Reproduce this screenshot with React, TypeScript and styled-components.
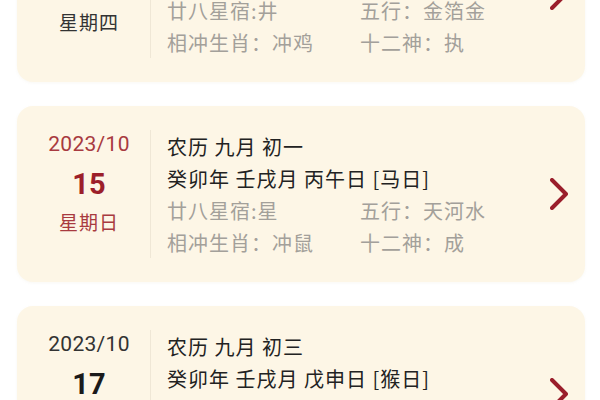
import styled, { createGlobalStyle } from 'styled-components'

const GlobalStyle = createGlobalStyle`
  html, body {
    margin: 0;
    padding: 0;
    background: #ffffff;
    overflow: hidden;
  }
  body {
    font-family: "Noto Sans CJK SC", Roboto, sans-serif;
  }
`

type Day = {
  ym: string
  day: string
  week: string
  lunar: string
  ganzhi: string
  xiu: string
  wuxing: string
  chong: string
  shen: string
  highlight?: boolean
}

const days: Day[] = [
  { ym: '2023/10', day: '12', week: '星期四', lunar: '农历 八月 廿八', ganzhi: '癸卯年 壬戌月 癸卯日 [兔日]', xiu: '廿八星宿:井', wuxing: '五行：金箔金', chong: '相冲生肖：冲鸡', shen: '十二神：执' },
  { ym: '2023/10', day: '15', week: '星期日', lunar: '农历 九月 初一', ganzhi: '癸卯年 壬戌月 丙午日 [马日]', xiu: '廿八星宿:星', wuxing: '五行：天河水', chong: '相冲生肖：冲鼠', shen: '十二神：成', highlight: true },
  { ym: '2023/10', day: '17', week: '星期二', lunar: '农历 九月 初三', ganzhi: '癸卯年 壬戌月 戊申日 [猴日]', xiu: '廿八星宿:轸', wuxing: '五行：大驿土', chong: '相冲生肖：冲虎', shen: '十二神：开' },
]

const StyledList = styled.div`
  display: flex;
  flex-direction: column;
  gap: 24px;
  margin-top: -94px;
  padding: 0 15px 0 17px;
`

const StyledCard = styled.div`
  display: flex;
  align-items: center;
  background: #fdf6e6;
  border-radius: 16px;
  padding: 24px 17px 24px 11px;
  box-shadow: 0 1px 3px rgba(180, 160, 120, 0.08);
`

const StyledDateCol = styled.div<{ $red?: boolean }>`
  width: 122px;
  align-self: stretch;
  display: flex;
  flex-direction: column;
  align-items: center;
  justify-content: flex-start;
  border-right: 1px solid #efe7d6;
  color: ${p => (p.$red ? '#a83a40' : '#333333')};
`

const StyledYm = styled.div`
  font-family: Roboto, "Noto Sans CJK SC", sans-serif;
  font-size: 21px;
  line-height: 28px;
  letter-spacing: 0.3px;
`

const StyledDayNum = styled.div<{ $red?: boolean }>`
  font-family: Roboto, "Noto Sans CJK SC", sans-serif;
  font-size: 29px;
  font-weight: 700;
  line-height: 40px;
  margin: 6px 0 4px;
  color: ${p => (p.$red ? '#9c1f2a' : '#1a1a1a')};
`

const StyledWeek = styled.div`
  font-size: 19px;
  line-height: 28px;
  letter-spacing: 1px;
`

const StyledInfo = styled.div`
  flex: 1;
  padding-left: 16px;
  display: grid;
  grid-template-columns: 193px auto;
  grid-auto-rows: 32px;
  align-items: center;
  font-size: 20px;
  letter-spacing: 1px;
`

const StyledMain = styled.div`
  grid-column: 1 / span 2;
  color: #222222;
  white-space: nowrap;
`

const StyledMuted = styled.div`
  color: #a3a09a;
  white-space: nowrap;
`

const StyledChevron = styled.svg`
  width: 18px;
  height: 32px;
  flex-shrink: 0;
`

const Chevron = () => (
  <StyledChevron viewBox="0 0 18 32">
    <polyline points="2,2 16,16 2,30" fill="none" stroke="#9a1e2b" strokeWidth="4" strokeLinecap="round" strokeLinejoin="round" />
  </StyledChevron>
)

export default function App() {
  return (
    <>
      <GlobalStyle />
      <StyledList>
        {days.map(d => (
          <StyledCard key={d.day}>
            <StyledDateCol $red={d.highlight}>
              <StyledYm>{d.ym}</StyledYm>
              <StyledDayNum $red={d.highlight}>{d.day}</StyledDayNum>
              <StyledWeek>{d.week}</StyledWeek>
            </StyledDateCol>
            <StyledInfo>
              <StyledMain>{d.lunar}</StyledMain>
              <StyledMain>{d.ganzhi}</StyledMain>
              <StyledMuted>{d.xiu}</StyledMuted>
              <StyledMuted>{d.wuxing}</StyledMuted>
              <StyledMuted>{d.chong}</StyledMuted>
              <StyledMuted>{d.shen}</StyledMuted>
            </StyledInfo>
            <Chevron />
          </StyledCard>
        ))}
      </StyledList>
    </>
  )
}
